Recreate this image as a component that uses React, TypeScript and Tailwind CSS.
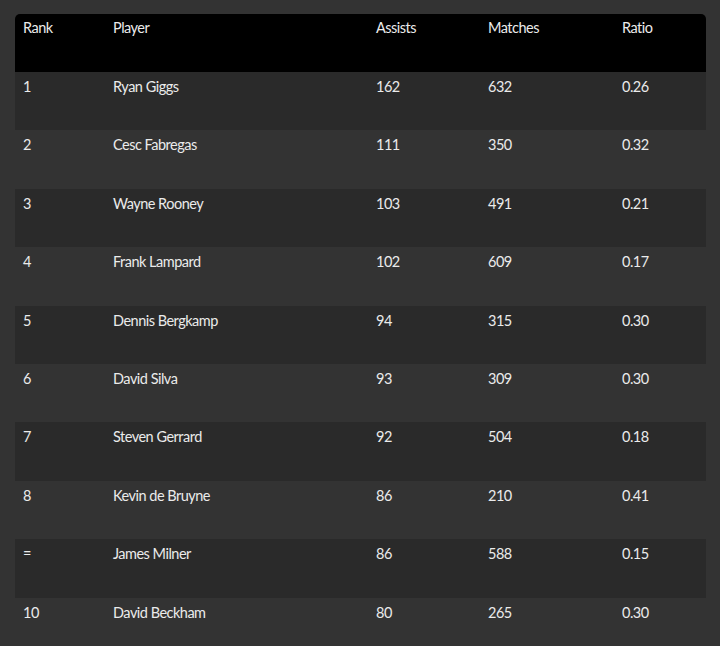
import React from 'react';

type Row = {
  rank: string;
  player: string;
  assists: number;
  matches: number;
  ratio: string;
};

const rows: Row[] = [
  { rank: '1', player: 'Ryan Giggs', assists: 162, matches: 632, ratio: '0.26' },
  { rank: '2', player: 'Cesc Fabregas', assists: 111, matches: 350, ratio: '0.32' },
  { rank: '3', player: 'Wayne Rooney', assists: 103, matches: 491, ratio: '0.21' },
  { rank: '4', player: 'Frank Lampard', assists: 102, matches: 609, ratio: '0.17' },
  { rank: '5', player: 'Dennis Bergkamp', assists: 94, matches: 315, ratio: '0.30' },
  { rank: '6', player: 'David Silva', assists: 93, matches: 309, ratio: '0.30' },
  { rank: '7', player: 'Steven Gerrard', assists: 92, matches: 504, ratio: '0.18' },
  { rank: '8', player: 'Kevin de Bruyne', assists: 86, matches: 210, ratio: '0.41' },
  { rank: '=', player: 'James Milner', assists: 86, matches: 588, ratio: '0.15' },
  { rank: '10', player: 'David Beckham', assists: 80, matches: 265, ratio: '0.30' },
];

export default function App() {
  return (
    <div
      className="min-h-screen bg-[#333333] px-[15px] pt-[14px] text-[#ebebeb] text-[14.5px] tracking-[-0.035em]"
      style={{ fontFamily: 'Lato, "Open Sans", sans-serif' }}
    >
      <table className="w-[691px] border-separate border-spacing-0 table-fixed">
        <colgroup>
          <col className="w-[90px]" />
          <col className="w-[263px]" />
          <col className="w-[112px]" />
          <col className="w-[134px]" />
          <col className="w-[92px]" />
        </colgroup>
        <thead>
          <tr className="h-[58px] bg-black">
            <th className="rounded-tl-[5px] px-2 pt-[5px] text-left align-top font-normal leading-[18px]">Rank</th>
            <th className="px-2 pt-[5px] text-left align-top font-normal leading-[18px]">Player</th>
            <th className="px-2 pt-[5px] text-left align-top font-normal leading-[18px]">Assists</th>
            <th className="px-2 pt-[5px] text-left align-top font-normal leading-[18px]">Matches</th>
            <th className="rounded-tr-[5px] px-2 pt-[5px] text-left align-top font-normal leading-[18px]">Ratio</th>
          </tr>
        </thead>
        <tbody>
          {rows.map((r, i) => (
            <tr key={r.player} className={`h-[58.4px] ${i % 2 === 0 ? 'bg-[#2a2a2a]' : ''}`}>
              <td className="px-2 pt-[6px] align-top leading-[18px]">{r.rank}</td>
              <td className="px-2 pt-[6px] align-top leading-[18px]">{r.player}</td>
              <td className="px-2 pt-[6px] align-top leading-[18px]">{r.assists}</td>
              <td className="px-2 pt-[6px] align-top leading-[18px]">{r.matches}</td>
              <td className="px-2 pt-[6px] align-top leading-[18px]">{r.ratio}</td>
            </tr>
          ))}
        </tbody>
      </table>
    </div>
  );
}
